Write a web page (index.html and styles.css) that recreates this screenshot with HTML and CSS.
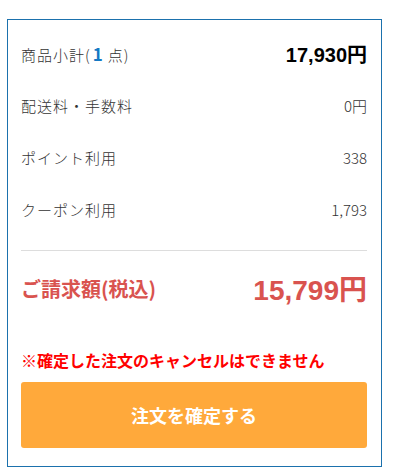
FILE: index.html
```html
<!DOCTYPE html>
<html lang="ja">
<head>
  <meta charset="UTF-8" />
  <meta name="viewport" content="width=device-width, initial-scale=1.0"/>
  <title>注文確認</title>
  <link rel="stylesheet" href="styles.css">
</head>
<body>

  <!-- Order summary -->
  <div class="summary">
    <div class="row">
      <span class="label">商品小計(<b class="count">1</b>点)</span>
      <span class="value subtotal">17,930円</span>
    </div>
    <div class="row">
      <span class="label">配送料・手数料</span>
      <span class="value">0円</span>
    </div>
    <div class="row">
      <span class="label">ポイント利用</span>
      <span class="value">338</span>
    </div>
    <div class="row">
      <span class="label">クーポン利用</span>
      <span class="value">1,793</span>
    </div>

    <div class="total">
      <span class="total-label">ご請求額(税込)</span>
      <span class="total-value">15,799円</span>
    </div>

    <p class="notice">※確定した注文のキャンセルはできません</p>
    <button class="order-btn">注文を確定する</button>
  </div>

</body>
</html>
```

FILE: styles.css
```css
body {
  margin: 0;
  font-family: "Noto Sans CJK JP", sans-serif;
  background-color: #fff;
  color: #333;
}

/* SUMMARY BOX */
.summary {
  width: 346px;
  margin: 19px 0 0 7px;
  padding: 7px 14px 18px 13px;
  border: 1px solid #1b71ad;
}

.row {
  display: flex;
  justify-content: space-between;
  align-items: center;
  height: 52px;
}

.label {
  font-size: 15px;
  font-weight: 300;
  letter-spacing: 1px;
}

.count {
  color: #1479c4;
  font-size: 17px;
  font-weight: 700;
  margin: 0 4px 0 2px;
}

.value {
  font-size: 15px;
  font-weight: 300;
}

.subtotal {
  font-family: "Liberation Sans", "Noto Sans CJK JP", sans-serif;
  font-size: 20px;
  font-weight: bold;
  color: #000;
}

/* Total */
.total {
  display: flex;
  justify-content: space-between;
  align-items: center;
  height: 74px;
  margin-top: 15px;
  border-top: 1px solid #ddd;
  color: #d9534f;
  font-weight: bold;
}

.total-label {
  font-size: 20px;
}

.total-value {
  font-family: "Liberation Sans", "Noto Sans CJK JP", sans-serif;
  font-size: 28px;
}

.notice {
  margin: 23px 0 0;
  line-height: 24px;
  font-size: 16px;
  font-weight: bold;
  color: #f00;
}

.order-btn {
  display: block;
  width: 100%;
  height: 66px;
  margin-top: 10px;
  background-color: #ffa93b;
  color: white;
  border: none;
  border-radius: 3px;
  font-family: inherit;
  font-size: 18px;
  font-weight: bold;
  cursor: pointer;
}
```
